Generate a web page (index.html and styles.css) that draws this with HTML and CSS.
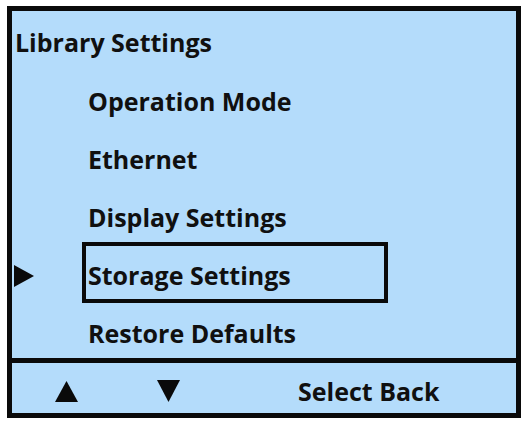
FILE: index.html
```html
<!DOCTYPE html>
<html lang="en">
<head>
<meta charset="utf-8">
<title>Library Settings</title>
<link rel="stylesheet" href="styles.css">
</head>
<body>
<div class="screen">
  <div class="menu">
    <div class="title">Library Settings</div>
    <div class="item"><span class="marker"></span><span class="label">Operation Mode</span></div>
    <div class="item"><span class="marker"></span><span class="label">Ethernet</span></div>
    <div class="item"><span class="marker"></span><span class="label">Display Settings</span></div>
    <div class="item selected">
      <span class="marker"><svg class="arrow-right" width="20" height="22" viewBox="0 0 20 22"><polygon points="0,0 20,11 0,22" /></svg></span>
      <span class="label">Storage Settings</span>
    </div>
    <div class="item"><span class="marker"></span><span class="label">Restore Defaults</span></div>
  </div>
  <div class="footer">
    <span class="key key-up"><svg width="23" height="21" viewBox="0 0 23 21"><polygon points="11.5,0 23,21 0,21" /></svg></span>
    <span class="key key-down"><svg width="23" height="22" viewBox="0 0 23 22"><polygon points="0,0 23,0 11.5,22" /></svg></span>
    <span class="softkeys">Select Back</span>
  </div>
</div>
</body>
</html>
```
FILE: styles.css
```css
html, body {
  margin: 0;
  padding: 0;
  background: #ffffff;
}
body {
  padding: 6px 0 0 7px;
  font-family: "Open Sans", "Noto Sans", sans-serif;
  font-weight: 700;
  color: #101010;
}
.screen {
  box-sizing: border-box;
  width: 514px;
  height: 412px;
  border: 5px solid #0a0a0a;
  background: #b4dcfb;
  display: flex;
  flex-direction: column;
}
.menu {
  height: 347px;
  overflow: hidden;
  padding-top: 2px;
  box-sizing: border-box;
}
.title {
  height: 58px;
  line-height: 58px;
  padding-left: 3px;
  font-size: 25px;
}
.item {
  height: 58px;
  display: flex;
  align-items: center;
}
.marker {
  width: 70px;
  padding: 3px 0 0 2px;
  box-sizing: border-box;
  display: flex;
  align-items: center;
}
.arrow-right polygon, .key polygon {
  fill: #0a0a0a;
}
.label {
  align-self: flex-start;
  box-sizing: border-box;
  width: 306px;
  height: 61px;
  margin-top: -3px;
  border: 4px solid transparent;
  padding: 4px 0 0 2px;
  display: flex;
  align-items: center;
  font-size: 25px;
}
.selected .label {
  border-color: #0a0a0a;
}
.footer {
  flex: 1;
  border-top: 5px solid #0a0a0a;
  display: flex;
  align-items: center;
  padding-top: 6px;
  box-sizing: border-box;
}
.key {
  display: flex;
}
.key-up {
  margin-left: 43px;
}
.key-down {
  margin-left: 79px;
}
.softkeys {
  margin-left: 118px;
  font-size: 25px;
}
```
